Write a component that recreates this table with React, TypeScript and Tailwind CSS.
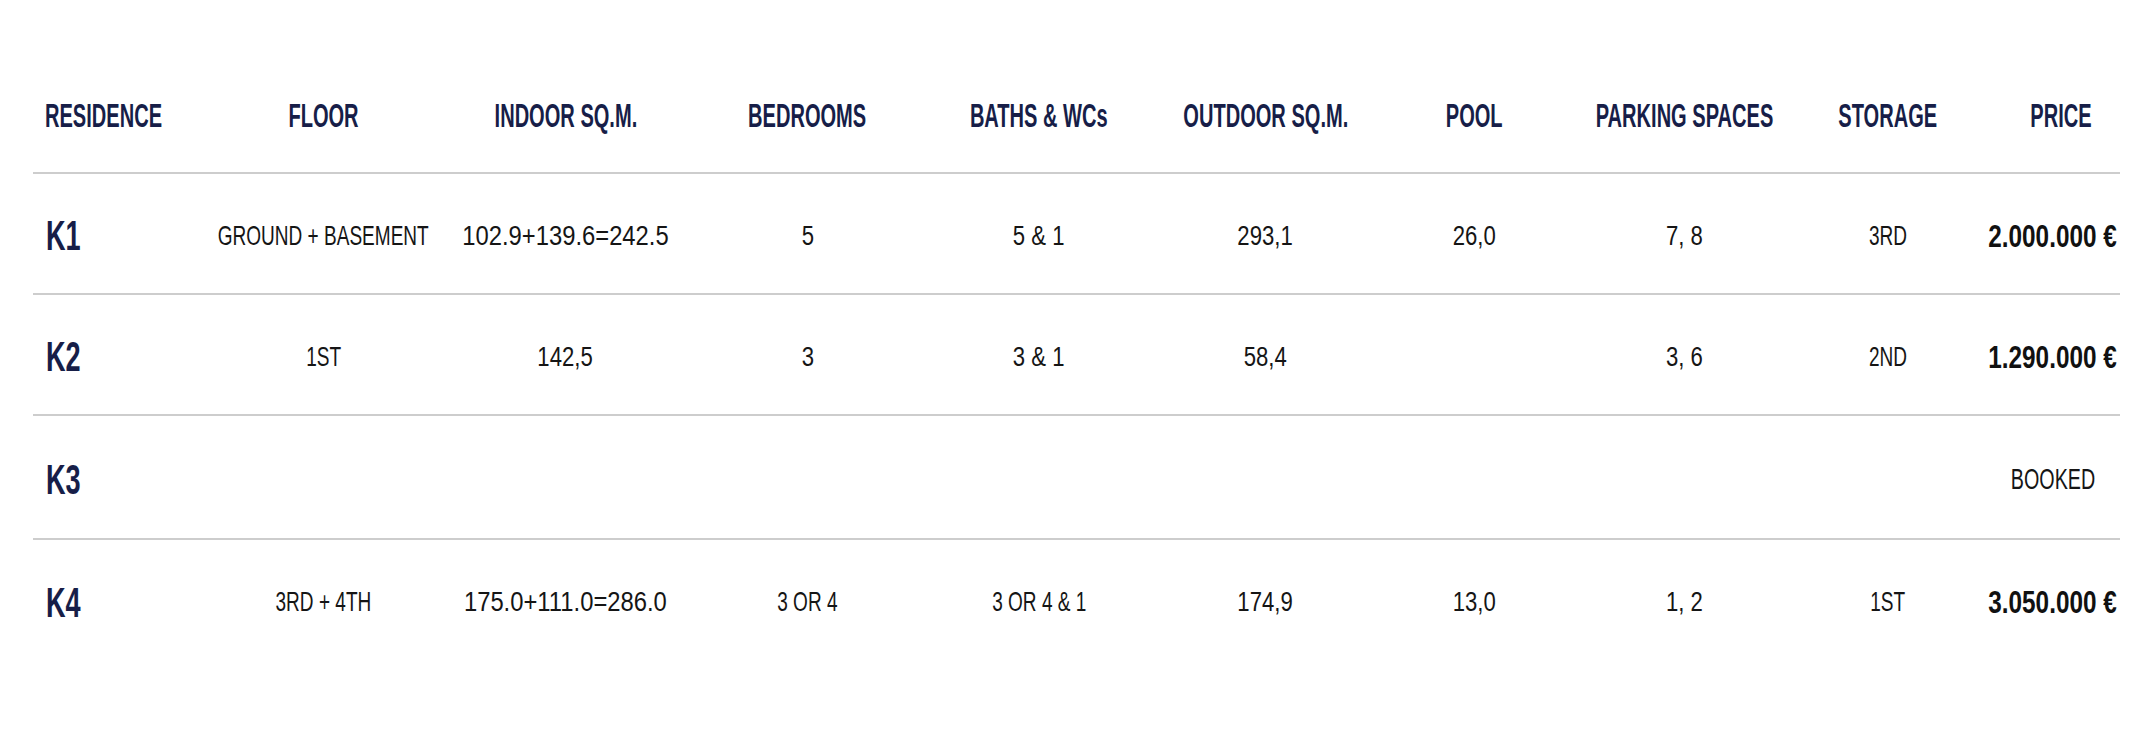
const HEADERS = [
  "RESIDENCE",
  "FLOOR",
  "INDOOR SQ.M.",
  "BEDROOMS",
  "BATHS & WCs",
  "OUTDOOR SQ.M.",
  "POOL",
  "PARKING SPACES",
  "STORAGE",
  "PRICE",
];

type Row = {
  id: string;
  cells: string[];
  price: string;
  booked?: boolean;
};

const ROWS: Row[] = [
  {
    id: "K1",
    cells: ["GROUND + BASEMENT", "102.9+139.6=242.5", "5", "5 & 1", "293,1", "26,0", "7, 8", "3RD"],
    price: "2.000.000 €",
  },
  {
    id: "K2",
    cells: ["1ST", "142,5", "3", "3 & 1", "58,4", "", "3, 6", "2ND"],
    price: "1.290.000 €",
  },
  { id: "K3", cells: ["", "", "", "", "", "", "", ""], price: "BOOKED", booked: true },
  {
    id: "K4",
    cells: ["3RD + 4TH", "175.0+111.0=286.0", "3 OR 4", "3 OR 4 & 1", "174,9", "13,0", "1, 2", "1ST"],
    price: "3.050.000 €",
  },
];

const gridCls =
  "grid grid-cols-[169px_243px_241px_243px_220px_233px_185px_234px_174px_144px] items-center";

const rowH = ["h-[121px]", "h-[121px]", "h-[124px]", "h-[120px]"];

const font = { fontFamily: '"Liberation Sans", Arial, sans-serif' };

// the source font is condensed, so each label is squeezed to match its width
const squeeze = (c: string) => {
  if (c.includes("=")) return "scale-x-[0.85]";
  if (/[A-Z]/.test(c)) return "scale-x-[0.68]";
  return "scale-x-[0.79]";
};

export default function App() {
  return (
    <div className="w-full h-[730px] bg-white pt-[58px] px-[33px]" style={font}>
      <div className={`${gridCls} h-[116px] border-b-2 border-[#cdcdcd]`}>
        {HEADERS.map((h, i) => (
          <div
            key={h}
            className={
              i === 0
                ? "flex justify-start pl-[12px]"
                : i === 9
                  ? "flex justify-center pl-[28px]"
                  : "flex justify-center"
            }
          >
            <span
              className={`inline-block shrink-0 text-[34px] leading-none font-bold text-[#171e48] scale-x-[0.59] whitespace-nowrap ${
                i === 0 ? "origin-left" : "origin-center"
              }`}
            >
              {h}
            </span>
          </div>
        ))}
      </div>

      {ROWS.map((r, ri) => (
        <div
          key={r.id}
          className={`${gridCls} ${rowH[ri]} ${
            ri < ROWS.length - 1 ? "border-b-2 border-[#cdcdcd]" : ""
          }`}
        >
          <div className="flex justify-start pl-[13px] pt-[4px]">
            <span className="inline-block origin-left scale-x-[0.63] text-[43px] leading-none font-bold text-[#171e48]">
              {r.id}
            </span>
          </div>
          {r.cells.map((c, ci) => (
            <div key={ci} className="flex justify-center pt-[4px]">
              {c && (
                <span
                  className={`inline-block shrink-0 text-[28px] leading-none text-[#151515] whitespace-nowrap ${squeeze(c)}`}
                >
                  {c}
                </span>
              )}
            </div>
          ))}
          <div className="flex justify-center pl-[12px] pt-[4px]">
            {r.booked ? (
              <span className="inline-block shrink-0 text-[29px] leading-none text-[#151515] scale-x-[0.68]">
                {r.price}
              </span>
            ) : (
              <span className="inline-block shrink-0 text-[32px] leading-none font-bold text-[#111] scale-x-[0.76] whitespace-nowrap">
                {r.price}
              </span>
            )}
          </div>
        </div>
      ))}
    </div>
  );
}
